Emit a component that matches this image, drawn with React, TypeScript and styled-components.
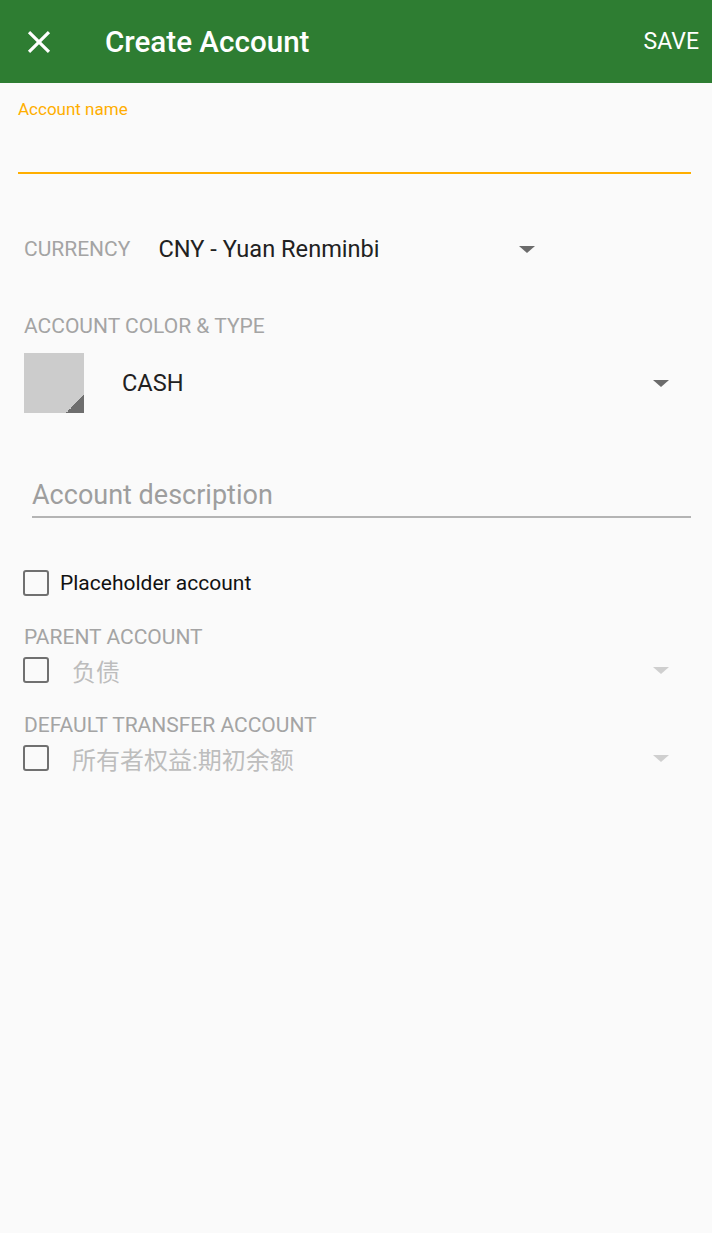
import styled, { createGlobalStyle } from "styled-components";

const GlobalStyle = createGlobalStyle`
  body {
    margin: 0;
    background: #fafafa;
    font-family: Roboto, "Noto Sans", "Noto Sans CJK SC", sans-serif;
  }
`;

const Page = styled.div`
  min-height: 100vh;
  background: #fafafa;
`;

const AppBar = styled.header`
  height: 83px;
  background: #2e7d32;
  display: flex;
  align-items: center;
  padding: 0 13px 0 20px;
  box-sizing: border-box;
  color: #fff;
`;

const CloseButton = styled.button`
  width: 38px;
  height: 38px;
  padding: 0;
  border: none;
  background: none;
  color: #fff;
  display: flex;
`;

const Title = styled.h1`
  margin: 0 0 0 47px;
  font-size: 29.6px;
  font-weight: 500;
  flex: 1;
`;

const SaveButton = styled.button`
  border: none;
  background: none;
  padding: 0;
  color: #fff;
  font-family: inherit;
  font-size: 23px;
`;

const NameField = styled.label`
  display: block;
  margin: 16px 21px 0 18px;
`;

const FloatingLabel = styled.span`
  display: block;
  font-size: 17px;
  line-height: 20px;
  color: #ffae00;
`;

const TextInput = styled.input<{ $focused?: boolean }>`
  display: block;
  width: 100%;
  box-sizing: border-box;
  border: none;
  outline: none;
  background: transparent;
  font-family: inherit;
  color: #212121;
  border-bottom: 2px solid ${(p) => (p.$focused ? "#ffae00" : "#b4b4b4")};
`;

const NameInput = styled(TextInput)`
  height: 55px;
  font-size: 23px;
`;

const CurrencyRow = styled.div`
  display: flex;
  align-items: center;
  height: 48px;
  margin: 51px 0 0 24px;
`;

const SectionLabel = styled.div<{ $inline?: boolean }>`
  font-size: 21px;
  line-height: 24px;
  color: #a4a4a4;
  margin: ${(p) => (p.$inline ? "0 28px 0 0" : "0 0 0 24px")};
`;

const Spinner = styled.div<{ $disabled?: boolean }>`
  display: flex;
  align-items: center;
  justify-content: space-between;
  font-size: 23.6px;
  color: ${(p) => (p.$disabled ? "#bdbdbd" : "#212121")};
`;

const CurrencySpinner = styled(Spinner)`
  width: 377px;
`;

const Arrow = styled.span<{ $disabled?: boolean }>`
  width: 0;
  height: 0;
  border-left: 8px solid transparent;
  border-right: 8px solid transparent;
  border-top: 7px solid ${(p) => (p.$disabled ? "#cfcfcf" : "#6b6b6b")};
`;

const Section = styled.div<{ $top: number }>`
  margin-top: ${(p) => p.$top}px;
`;

const ColorRow = styled.div`
  display: flex;
  align-items: center;
  height: 60px;
  margin: 15px 43px 0 24px;
  gap: 38px;
`;

const ColorSwatch = styled.div`
  width: 60px;
  height: 60px;
  flex-shrink: 0;
  background: linear-gradient(135deg, #cccccc 0 85%, #6e6e6e 85% 100%);
`;

const TypeSpinner = styled(Spinner)`
  flex: 1;
`;

const DescriptionInput = styled(TextInput)`
  margin: 63px 21px 0 32px;
  width: calc(100% - 53px);
  height: 42px;
  padding: 0 0 2px;
  font-size: 27px;
  &::placeholder {
    color: #9e9e9e;
  }
`;

const CheckRow = styled.div<{ $top: number; $gap: number }>`
  display: flex;
  align-items: center;
  height: 26px;
  margin: ${(p) => p.$top}px 43px 0 23px;
  gap: ${(p) => p.$gap}px;
`;

const CheckBox = styled.span`
  width: 26px;
  height: 26px;
  box-sizing: border-box;
  border: 2.5px solid #707070;
  border-radius: 3px;
  flex-shrink: 0;
`;

const CheckText = styled.span`
  font-size: 21px;
  color: #111;
`;

const RowSpinner = styled(Spinner)`
  flex: 1;
  font-size: 24px;
`;

function CloseIcon() {
  return (
    <svg width="38" height="38" viewBox="0 0 24 24" fill="currentColor">
      <path d="M19 6.41L17.59 5 12 10.59 6.41 5 5 6.41 10.59 12 5 17.59 6.41 19 12 13.41 17.59 19 19 17.59 13.41 12z" />
    </svg>
  );
}

export default function App() {
  return (
    <Page>
      <GlobalStyle />
      <AppBar>
        <CloseButton>
          <CloseIcon />
        </CloseButton>
        <Title>Create Account</Title>
        <SaveButton>SAVE</SaveButton>
      </AppBar>

      <NameField>
        <FloatingLabel>Account name</FloatingLabel>
        <NameInput $focused />
      </NameField>

      <CurrencyRow>
        <SectionLabel $inline>CURRENCY</SectionLabel>
        <CurrencySpinner>
          CNY - Yuan Renminbi
          <Arrow />
        </CurrencySpinner>
      </CurrencyRow>

      <Section $top={41}>
        <SectionLabel>ACCOUNT COLOR &amp; TYPE</SectionLabel>
        <ColorRow>
          <ColorSwatch />
          <TypeSpinner>
            CASH
            <Arrow />
          </TypeSpinner>
        </ColorRow>
      </Section>

      <DescriptionInput placeholder="Account description" />

      <CheckRow $top={52} $gap={11}>
        <CheckBox />
        <CheckText>Placeholder account</CheckText>
      </CheckRow>

      <Section $top={29}>
        <SectionLabel>PARENT ACCOUNT</SectionLabel>
        <CheckRow $top={8} $gap={23}>
          <CheckBox />
          <RowSpinner $disabled>
            负债
            <Arrow $disabled />
          </RowSpinner>
        </CheckRow>
      </Section>

      <Section $top={30}>
        <SectionLabel>DEFAULT TRANSFER ACCOUNT</SectionLabel>
        <CheckRow $top={8} $gap={23}>
          <CheckBox />
          <RowSpinner $disabled>
            所有者权益:期初余额
            <Arrow $disabled />
          </RowSpinner>
        </CheckRow>
      </Section>
    </Page>
  );
}
